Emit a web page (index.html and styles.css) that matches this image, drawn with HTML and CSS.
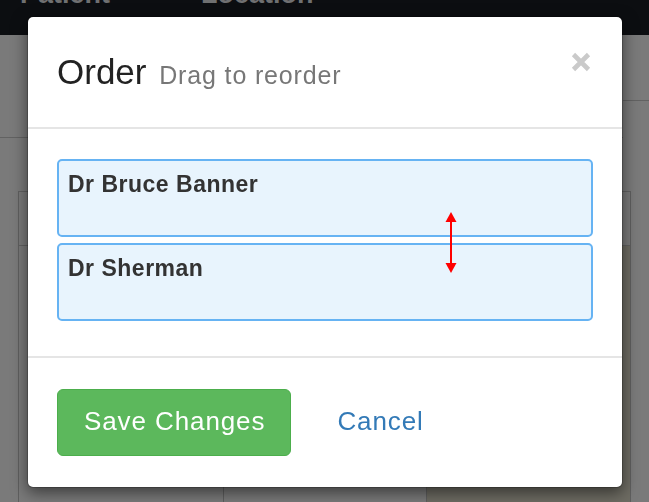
FILE: index.html
```html
<!DOCTYPE html>
<html lang="en">
<head>
<meta charset="utf-8">
<title>Order</title>
<link rel="stylesheet" href="styles.css">
</head>
<body>
<div class="page">
  <header class="navbar">
    <span class="nav-item">Patient</span>
    <span class="nav-item nav-location">Location</span>
  </header>
  <div class="toolbar">
    <div class="toolbar-left"></div>
    <div class="toolbar-right"></div>
  </div>
  <div class="calendar">
    <div class="cal-row cal-head">
      <div class="cell"></div>
      <div class="cell"></div>
      <div class="cell"></div>
    </div>
    <div class="cal-row cal-body">
      <div class="cell"></div>
      <div class="cell"></div>
      <div class="cell today"></div>
    </div>
  </div>
</div>

<div class="modal">
  <div class="dialog">
    <div class="modal-header">
      <h3 class="modal-title">Order <small>Drag to reorder</small></h3>
      <button class="close" type="button" aria-label="Close">
        <svg width="20" height="20" viewBox="0 0 20 20"><path d="M2.5 2.5 L17.5 17.5 M17.5 2.5 L2.5 17.5" stroke="#cacaca" stroke-width="4.6" fill="none"/></svg>
      </button>
    </div>
    <div class="modal-body">
      <ul class="sortable">
        <li class="item">Dr Bruce Banner</li>
        <li class="item">Dr Sherman</li>
        <li class="drag-arrow" aria-hidden="true">
          <svg width="12" height="61" viewBox="0 0 12 61"><polygon points="6,0 0.5,10 11.5,10" fill="#ff0000"/><line x1="6" y1="9" x2="6" y2="52" stroke="#ff0000" stroke-width="2"/><polygon points="6,61 0.5,51 11.5,51" fill="#ff0000"/></svg>
        </li>
      </ul>
    </div>
    <div class="modal-footer">
      <button class="btn btn-success" type="button">Save Changes</button>
      <a class="btn-link" href="#">Cancel</a>
    </div>
  </div>
</div>
</body>
</html>
```

FILE: styles.css
```css
html, body {
  margin: 0;
  padding: 0;
  height: 100%;
  overflow: hidden;
}

body {
  background: #7a7a7a;
  font-family: "Liberation Sans", Arial, Helvetica, sans-serif;
  color: #333;
}

.page {
  height: 502px;
  overflow: hidden;
}

.navbar {
  height: 35px;
  background: #0c0e11;
  display: flex;
  padding-left: 20px;
  overflow: hidden;
}

.nav-item {
  display: block;
  margin-top: -19px;
  font-size: 27px;
  line-height: 27px;
  font-weight: 700;
  color: #6f7071;
}

.nav-location {
  margin-left: 91px;
}

.toolbar {
  display: flex;
  align-items: flex-start;
}

.toolbar-left {
  flex: 1;
  height: 102px;
  border-bottom: 1px solid #626262;
}

.toolbar-right {
  width: 26px;
  height: 65px;
  border-bottom: 1px solid #626262;
}

.calendar {
  margin: 53px 18px 0 18px;
  border-left: 1px solid #5f5f5f;
  border-right: 1px solid #5f5f5f;
  border-top: 1px solid #626262;
}

.cal-row {
  display: grid;
  grid-template-columns: 204px 203px 1fr;
}

.cal-head {
  height: 53px;
  border-bottom: 1px solid #626262;
}

.cal-body {
  height: 320px;
}

.cell + .cell {
  border-left: 1px solid #5f5f5f;
}

.today {
  background: #6e6c63;
}

/* Modal */
.modal {
  position: fixed;
  top: 16px;
  left: 27px;
  width: 596px;
}

.dialog {
  background: #fff;
  border: 1px solid rgba(0, 0, 0, 0.2);
  border-radius: 6px;
  background-clip: padding-box;
  box-shadow: 0 5px 15px rgba(0, 0, 0, 0.5);
}

.modal-header {
  display: flex;
  align-items: flex-start;
  padding: 34px 29px;
  border-bottom: 2px solid #e5e5e5;
}

.modal-title {
  flex: 1;
  height: 42px;
  margin: 0;
  font-size: 35px;
  line-height: 42px;
  font-weight: 400;
  color: #222;
}

.modal-title small {
  margin-left: 3px;
  font-size: 25px;
  line-height: 1;
  letter-spacing: 0.85px;
  color: #777;
}

.close {
  margin: 1px 2px 0 0;
  padding: 0;
  border: 0;
  background: none;
  line-height: 0;
  cursor: pointer;
}

.modal-body {
  padding: 30px 29px 35px;
}

.sortable {
  list-style: none;
  margin: 0;
  padding: 0;
  display: flex;
  flex-direction: column;
  gap: 6px;
  position: relative;
}

.item {
  box-sizing: border-box;
  height: 78px;
  padding: 10px 9px;
  background: #e8f4fd;
  border: 2px solid #66b3f3;
  border-radius: 5px;
  font-size: 23px;
  line-height: 1.2;
  font-weight: 700;
  letter-spacing: 0.5px;
  color: #333;
}

.drag-arrow {
  position: absolute;
  left: 388px;
  top: 53px;
  width: 12px;
  height: 61px;
  line-height: 0;
}

.modal-footer {
  display: flex;
  align-items: baseline;
  padding: 31px 29px 31px;
  border-top: 2px solid #e5e5e5;
}

.btn {
  font-family: inherit;
  font-size: 26px;
  line-height: 35px;
  letter-spacing: 0.9px;
  padding: 14px 25px 16px 26px;
  border-radius: 6px;
  cursor: pointer;
}

.btn-success {
  background: #5cb85c;
  border: 1px solid #4cae4c;
  color: #fff;
}

.btn-link {
  margin-left: 46px;
  font-size: 26px;
  letter-spacing: 0.9px;
  color: #337ab7;
  text-decoration: none;
}
```
